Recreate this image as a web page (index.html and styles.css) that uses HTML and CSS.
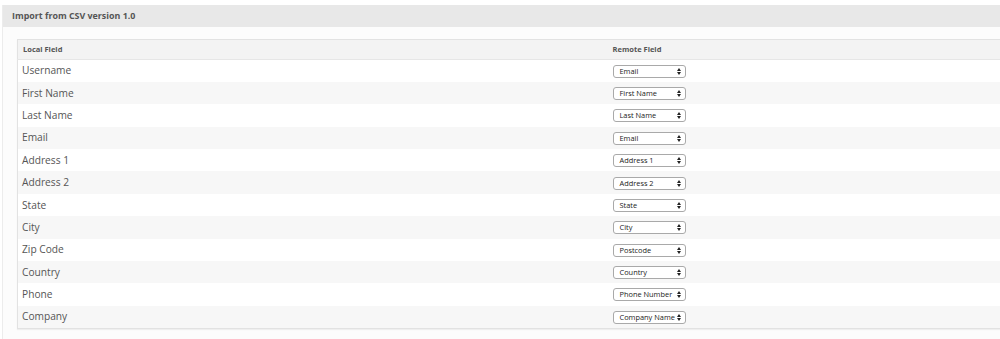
FILE: index.html
```html
<!DOCTYPE html>
<html>
<head>
<meta charset="utf-8">
<link rel="stylesheet" href="styles.css">
</head>
<body>
<div class="panel">
  <div class="panel-head">Import from CSV version 1.0</div>
  <div class="panel-body">
    <table class="map">
      <thead>
        <tr><th class="c-local">Local Field</th><th>Remote Field</th></tr>
      </thead>
      <tbody>
        <tr><td>Username</td><td><span class="sel">Email</span></td></tr>
        <tr><td>First Name</td><td><span class="sel">First Name</span></td></tr>
        <tr><td>Last Name</td><td><span class="sel">Last Name</span></td></tr>
        <tr><td>Email</td><td><span class="sel">Email</span></td></tr>
        <tr><td>Address 1</td><td><span class="sel">Address 1</span></td></tr>
        <tr><td>Address 2</td><td><span class="sel">Address 2</span></td></tr>
        <tr><td>State</td><td><span class="sel">State</span></td></tr>
        <tr><td>City</td><td><span class="sel">City</span></td></tr>
        <tr><td>Zip Code</td><td><span class="sel">Postcode</span></td></tr>
        <tr><td>Country</td><td><span class="sel">Country</span></td></tr>
        <tr><td>Phone</td><td><span class="sel">Phone Number</span></td></tr>
        <tr><td>Company</td><td><span class="sel">Company Name</span></td></tr>
      </tbody>
    </table>
  </div>
</div>
</body>
</html>
```

FILE: styles.css
```css
html, body {
  margin: 0;
  padding: 0;
  background: #ffffff;
  font-family: "Open Sans", "Liberation Sans", sans-serif;
  color: #555;
}
.panel {
  margin: 5px 0 0 2px;
  border-left: 1px solid #ececec;
  background: #fcfcfc;
  height: 334px;
}
.panel-head {
  background: #e8e8e8;
  height: 22px;
  line-height: 22px;
  padding-left: 9px;
  font-size: 8.9px;
  font-weight: 700;
  color: #555;
}
.panel-body {
  padding: 12px 0 0 14px;
}
.map {
  width: 1000px;
  border-collapse: collapse;
  border: 1px solid #e2e2e2;
  box-shadow: 0 1px 1px rgba(0,0,0,0.05);
}
.map th {
  box-sizing: border-box;
  background: #f3f3f3;
  height: 20px;
  padding: 0 0 2px 5px;
  text-align: left;
  font-size: 7.5px;
  font-weight: 700;
  color: #555;
  border-bottom: 1px solid #e6e6e6;
}
.map th.c-local, .map td:first-child {
  width: 590px;
}
.map td {
  box-sizing: border-box;
  height: 22.4px;
  padding: 0 0 1px 4px;
  line-height: 14px;
  font-size: 10.2px;
  color: #555;
}
.map tbody tr:nth-child(even) td {
  background: #f7f7f7;
}
.map tbody tr:nth-child(odd) td {
  background: #ffffff;
}
.map td + td {
  padding-left: 5px;
}
.sel {
  display: inline-flex;
  align-items: center;
  box-sizing: border-box;
  width: 73px;
  height: 13px;
  padding: 0 0 0 6px;
  border: 1px solid #a9a9a9;
  border-radius: 3px;
  background: #fff;
  font-size: 7.4px;
  line-height: 11px;
  color: #222;
  vertical-align: middle;
  position: relative;
  white-space: nowrap;
}
.sel::after {
  content: "";
  width: 0;
  height: 0;
  position: absolute;
  right: 4px;
  top: 2px;
  border-left: 2px solid transparent;
  border-right: 2px solid transparent;
  border-bottom: 3px solid #222;
}
.sel::before {
  content: "";
  width: 0;
  height: 0;
  position: absolute;
  right: 4px;
  bottom: 2px;
  border-left: 2px solid transparent;
  border-right: 2px solid transparent;
  border-top: 3px solid #222;
}
```
